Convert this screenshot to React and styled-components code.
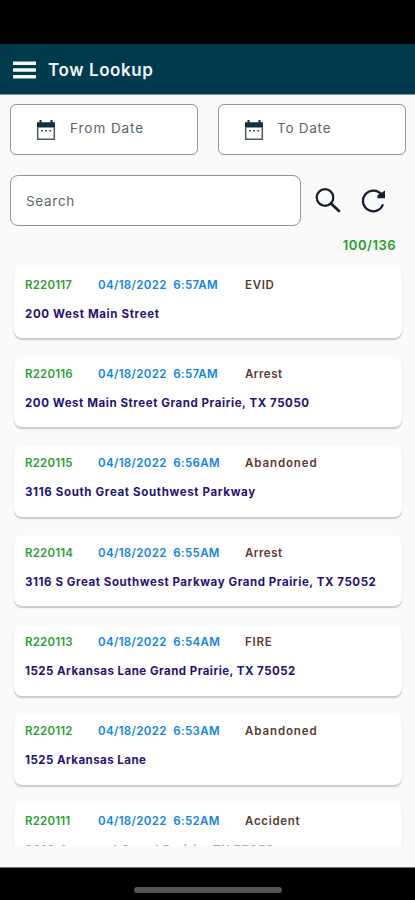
import React from "react";
import styled, { createGlobalStyle } from "styled-components";

const GlobalStyle = createGlobalStyle`
  * {
    box-sizing: border-box;
  }
  body {
    margin: 0;
    background: #fafafa;
    font-family: Inter, "Open Sans", sans-serif;
  }
`;

const Screen = styled.div`
  width: 415px;
  height: 900px;
  display: flex;
  flex-direction: column;
  overflow: hidden;
  background: #fafafa;
`;

const StatusBar = styled.div`
  flex: none;
  height: 44px;
  background: #000;
`;

const Header = styled.header`
  flex: none;
  height: 51px;
  padding: 1px 0 0 13px;
  display: flex;
  align-items: center;
  gap: 12px;
  background: #003a4d;
  border-bottom: 1px solid #7f939b;
`;

const Title = styled.h1`
  margin: 0;
  color: #f2f6f7;
  font-size: 17px;
  font-weight: 600;
  line-height: 24px;
  letter-spacing: 0.6px;
`;

const Dates = styled.div`
  flex: none;
  display: grid;
  grid-template-columns: 188px 188px;
  gap: 20px;
  padding: 9px 0 0 10px;
`;

const Field = styled.div`
  height: 51px;
  display: flex;
  align-items: center;
  background: #fff;
  border: 1px solid #929596;
  border-radius: 6px;
`;

const DateField = styled(Field)`
  padding: 2px 0 0 25px;
  gap: ${(props) => props.gap};
`;

const Placeholder = styled.span`
  color: #59666c;
  font-size: 13.5px;
  line-height: 18px;
  letter-spacing: ${(props) => props.spacing || "0.5px"};
  padding-bottom: ${(props) => props.lift || "0"};
`;

const SearchRow = styled.div`
  flex: none;
  display: flex;
  align-items: center;
  padding: 20px 0 0 10px;
`;

const SearchField = styled(Field)`
  width: 291px;
  padding-left: 15px;
  border-radius: 8px;
`;

const IconButton = styled.button`
  display: flex;
  padding: 0;
  margin-left: ${(props) => props.gap};
  border: 0;
  background: none;
`;

const Count = styled.div`
  flex: none;
  height: 41px;
  padding: 9px 19px 0 0;
  text-align: right;
  color: #1fa02a;
  font-size: 13px;
  font-weight: 600;
  line-height: 20px;
  letter-spacing: 0.5px;
`;

const List = styled.div`
  flex: none;
  height: 579px;
  display: flex;
  flex-direction: column;
  gap: 18.4px;
  padding: 0 13px 0 14px;
  overflow: hidden;
`;

const Card = styled.article`
  flex: none;
  height: 71px;
  padding: 9.5px 0 0 11px;
  background: #fff;
  border-radius: 8px;
  box-shadow: 0 1.5px 1.5px rgba(0, 0, 0, 0.2);
`;

const CardTop = styled.div`
  display: grid;
  grid-template-columns: 73px 147px 1fr;
  font-size: 11.5px;
  font-weight: 600;
  line-height: 16px;
  white-space: pre;
`;

const Number = styled.span`
  color: #2e9f34;
  letter-spacing: 0.2px;
`;

const Time = styled.span`
  color: #1284e8;
  letter-spacing: 0.35px;
`;

const Reason = styled.span`
  color: #5b3a30;
  letter-spacing: ${(props) => props.spacing};
`;

const Address = styled.div`
  margin-top: 13px;
  color: ${(props) => (props.faded ? "#aaa" : "#1e1478")};
  font-size: 11.5px;
  font-weight: 700;
  line-height: 16px;
  letter-spacing: ${(props) => props.spacing};
  white-space: nowrap;
`;

const Bottom = styled.div`
  flex: none;
  height: 33px;
  margin-top: auto;
  padding-top: 19px;
  display: flex;
  justify-content: center;
  background: #000;
  border-top: 1px solid #777;
`;

const HomeIndicator = styled.div`
  width: 148px;
  height: 6px;
  border-radius: 3px;
  background: #555;
`;

const reasonSpacing = {
  EVID: "0.7px",
  Arrest: "0.5px",
  Abandoned: "0.9px",
  FIRE: "0.8px",
  Accident: "0.7px",
};

const tows = [
  { number: "R220117", time: "6:57AM", reason: "EVID", address: "200 West Main Street", spacing: "0.65px" },
  { number: "R220116", time: "6:57AM", reason: "Arrest", address: "200 West Main Street Grand Prairie, TX 75050" },
  { number: "R220115", time: "6:56AM", reason: "Abandoned", address: "3116 South Great Southwest Parkway", spacing: "0.65px" },
  { number: "R220114", time: "6:55AM", reason: "Arrest", address: "3116 S Great Southwest Parkway Grand Prairie, TX 75052" },
  { number: "R220113", time: "6:54AM", reason: "FIRE", address: "1525 Arkansas Lane Grand Prairie, TX 75052", spacing: "0.48px" },
  { number: "R220112", time: "6:53AM", reason: "Abandoned", address: "1525 Arkansas Lane", spacing: "0.46px" },
  { number: "R220111", time: "6:52AM", reason: "Accident", address: "2610 Avenue J Grand Prairie, TX 75052", faded: true, spacing: "0.8px" },
];

function MenuIcon() {
  return (
    <svg width="23" height="18" viewBox="0 0 23 18" fill="#f4f7f8">
      <rect y="0.5" width="23" height="3.6" rx="0.6" />
      <rect y="7.2" width="23" height="3.6" rx="0.6" />
      <rect y="13.9" width="23" height="3.6" rx="0.6" />
    </svg>
  );
}

function CalendarIcon() {
  return (
    <svg width="20" height="21" viewBox="0 0 20 21" fill="#12303f">
      <path d="M1 2.2h2.5V0h2v2.2h9V0h2v2.2H19V7.6H1z" />
      <path d="M1.7 7v12.2h16.6V7" fill="none" stroke="#4a5b63" strokeWidth="1.5" />
      <path d="M5 10h1.6v1.6H5zM9.2 10h1.6v1.6H9.2zM13.4 10H15v1.6h-1.6z" />
    </svg>
  );
}

function SearchIcon() {
  return (
    <svg width="28" height="28" viewBox="0 0 28 28" fill="none" stroke="#151f2b">
      <circle cx="11" cy="10.5" r="8.3" strokeWidth="2.2" />
      <path d="M17 16.5l8.8 8.2" strokeWidth="2.8" />
    </svg>
  );
}

function RefreshIcon() {
  return (
    <svg width="26" height="26" viewBox="0 0 26 26" fill="none">
      <path d="M21.5 6.7A10.3 10.3 0 1 0 23 16.4" stroke="#151f2b" strokeWidth="2.3" />
      <path d="M25 2.4v7.8h-7.6V7.2z" fill="#151f2b" />
    </svg>
  );
}

function TowCard({ tow }) {
  return (
    <Card>
      <CardTop>
        <Number>{tow.number}</Number>
        <Time>{"04/18/2022  " + tow.time}</Time>
        <Reason spacing={reasonSpacing[tow.reason]}>{tow.reason}</Reason>
      </CardTop>
      <Address spacing={tow.spacing || "0.57px"} faded={tow.faded}>
        {tow.address}
      </Address>
    </Card>
  );
}

function App() {
  return (
    <Screen>
      <GlobalStyle />
      <StatusBar />
      <Header>
        <MenuIcon />
        <Title>Tow Lookup</Title>
      </Header>
      <Dates>
        <DateField gap="14px">
          <CalendarIcon />
          <Placeholder lift="6px" spacing="0.95px">From Date</Placeholder>
        </DateField>
        <DateField gap="13px">
          <CalendarIcon />
          <Placeholder lift="6px" spacing="0.75px">To Date</Placeholder>
        </DateField>
      </Dates>
      <SearchRow>
        <SearchField>
          <Placeholder spacing="0.7px">Search</Placeholder>
        </SearchField>
        <IconButton gap="13px" aria-label="Search">
          <SearchIcon />
        </IconButton>
        <IconButton gap="18px" aria-label="Refresh">
          <RefreshIcon />
        </IconButton>
      </SearchRow>
      <Count>100/136</Count>
      <List>
        {tows.map((tow) => (
          <TowCard key={tow.number} tow={tow} />
        ))}
      </List>
      <Bottom>
        <HomeIndicator />
      </Bottom>
    </Screen>
  );
}

export default App;
